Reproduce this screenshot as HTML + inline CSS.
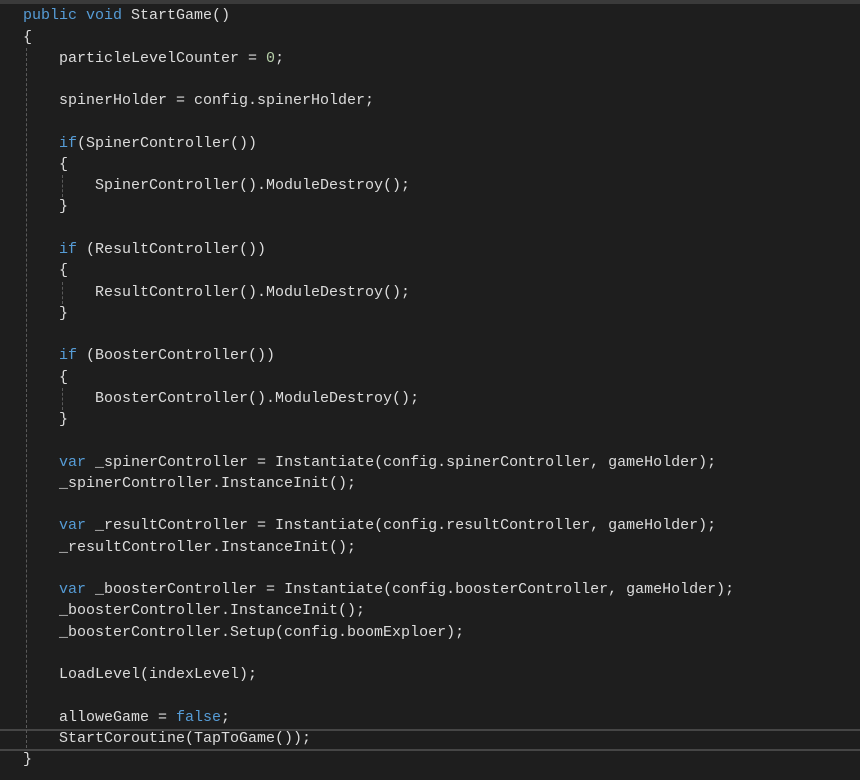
<!DOCTYPE html>
<html><head><meta charset="utf-8"><style>
body{margin:0;width:860px;height:780px;background:#1e1e1e;overflow:hidden;position:relative;font-family:"Liberation Mono",monospace;font-size:15px;color:#dcdcdc}
.top{position:absolute;left:0;top:0;width:860px;height:4px;background:#3a3a3a}
.l{position:absolute;left:23px;height:21px;line-height:21px;white-space:pre}
.k{color:#569cd6}.n{color:#b5cea8}
.g{position:absolute;width:0;border-left:1px dashed #5a5a5a}
.cur{position:absolute;left:0;top:729px;width:860px;height:18px;border-top:2px solid #464646;border-bottom:2px solid #464646}
</style></head><body>
<div class="top"></div>
<div class="cur"></div>
<div class="g" style="left:26px;top:48px;height:700px"></div>
<div class="g" style="left:62px;top:175px;height:22px"></div>
<div class="g" style="left:62px;top:282px;height:22px"></div>
<div class="g" style="left:62px;top:388px;height:22px"></div>
<div class="l" style="top:5px"><span class="k">public</span> <span class="k">void</span> StartGame()</div>
<div class="l" style="top:27px">{</div>
<div class="l" style="top:48px">    particleLevelCounter = <span class="n">0</span>;</div>
<div class="l" style="top:90px">    spinerHolder = config.spinerHolder;</div>
<div class="l" style="top:133px">    <span class="k">if</span>(SpinerController())</div>
<div class="l" style="top:154px">    {</div>
<div class="l" style="top:175px">        SpinerController().ModuleDestroy();</div>
<div class="l" style="top:196px">    }</div>
<div class="l" style="top:239px">    <span class="k">if</span> (ResultController())</div>
<div class="l" style="top:260px">    {</div>
<div class="l" style="top:282px">        ResultController().ModuleDestroy();</div>
<div class="l" style="top:303px">    }</div>
<div class="l" style="top:345px">    <span class="k">if</span> (BoosterController())</div>
<div class="l" style="top:367px">    {</div>
<div class="l" style="top:388px">        BoosterController().ModuleDestroy();</div>
<div class="l" style="top:409px">    }</div>
<div class="l" style="top:452px">    <span class="k">var</span> _spinerController = Instantiate(config.spinerController, gameHolder);</div>
<div class="l" style="top:473px">    _spinerController.InstanceInit();</div>
<div class="l" style="top:515px">    <span class="k">var</span> _resultController = Instantiate(config.resultController, gameHolder);</div>
<div class="l" style="top:537px">    _resultController.InstanceInit();</div>
<div class="l" style="top:579px">    <span class="k">var</span> _boosterController = Instantiate(config.boosterController, gameHolder);</div>
<div class="l" style="top:600px">    _boosterController.InstanceInit();</div>
<div class="l" style="top:622px">    _boosterController.Setup(config.boomExploer);</div>
<div class="l" style="top:664px">    LoadLevel(indexLevel);</div>
<div class="l" style="top:707px">    alloweGame = <span class="k">false</span>;</div>
<div class="l" style="top:728px">    StartCoroutine(TapToGame());</div>
<div class="l" style="top:749px">}</div>
</body></html>
